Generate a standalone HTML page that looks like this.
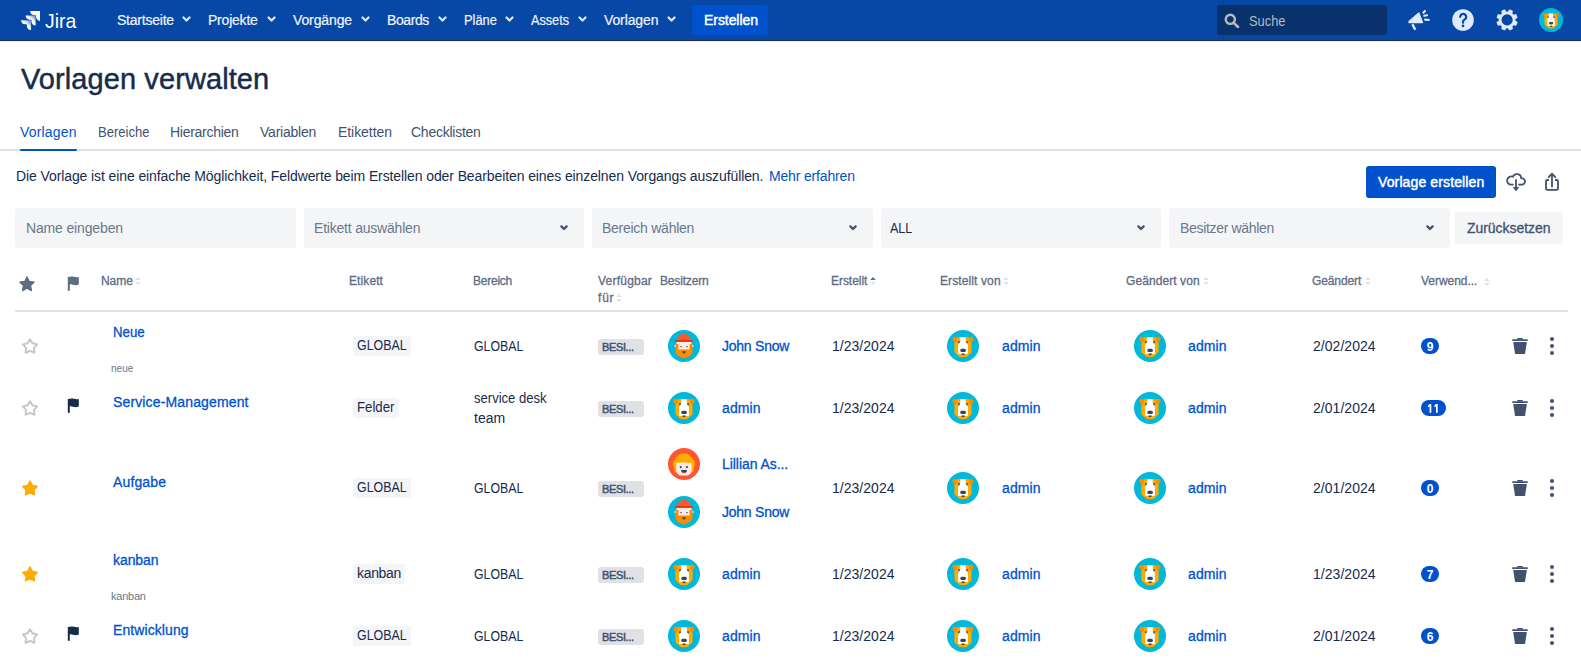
<!DOCTYPE html>
<html><head><meta charset="utf-8"><title>Vorlagen verwalten</title>
<style>
html,body{margin:0;padding:0;width:1581px;height:665px;overflow:hidden;background:#fff;}
body{position:relative;font-family:"Liberation Sans",sans-serif;}
.t{position:absolute;white-space:nowrap;}
.b{position:absolute;display:block;}
</style></head><body>
<div class="b" style="left:0px;top:0px;width:1581px;height:40px;background:#0747A6;border-radius:0px;"></div>
<div class="b" style="left:0px;top:40px;width:1581px;height:1px;background:#1F3056;border-radius:0px;"></div>
<div class="b" style="left:0px;top:41px;width:1581px;height:1px;background:#EDEEF0;border-radius:0px;"></div>
<svg class="b" style="left:20.8px;top:10.8px" width="19.2" height="19.2" viewBox="1.2 0 27.7 27.7"><defs>
<linearGradient id="lg1" x1="98%" y1="0%" x2="59%" y2="41%"><stop offset="18%" stop-color="#fff" stop-opacity="0.4"/><stop offset="100%" stop-color="#fff"/></linearGradient>
<linearGradient id="lg2" x1="100%" y1="0%" x2="55%" y2="45%"><stop offset="18%" stop-color="#fff" stop-opacity="0.4"/><stop offset="100%" stop-color="#fff"/></linearGradient>
</defs>
<path d="M27.7 0H14.4c0 3.3 2.7 6 6 6h2.5v2.4c0 3.3 2.7 6 6 6V1.2c0-.7-.5-1.2-1.2-1.2z" fill="#fff"/>
<path d="M21.1 6.6H7.8c0 3.3 2.7 6 6 6h2.5V15c0 3.3 2.7 6 6 6V7.8c0-.7-.5-1.2-1.2-1.2z" fill="url(#lg1)"/>
<path d="M14.5 13.2H1.2c0 3.3 2.7 6 6 6h2.5v2.4c0 3.3 2.7 6 6 6V14.4c0-.7-.5-1.2-1.2-1.2z" fill="url(#lg2)"/>
</svg>
<div class="t" style="left:45.00px;top:6px;font-size:21px;line-height:30px;color:#fff;transform:scaleX(0.9235);transform-origin:0.00px 0;">Jira</div>
<div class="t" style="left:117.00px;top:10px;font-size:14px;line-height:20px;-webkit-text-stroke:0.2px #EEF4FF;color:#EEF4FF;letter-spacing:-0.222px;">Startseite</div>
<svg class="b" style="left:182px;top:16px;" width="9" height="7" viewBox="0 0 9 7"><path d="M1.5 1.5L4.5 4.5L7.5 1.5" fill="none" stroke="#DEEBFF" stroke-width="2.2" stroke-linecap="round" stroke-linejoin="round"/></svg>
<div class="t" style="left:208.00px;top:10px;font-size:14px;line-height:20px;-webkit-text-stroke:0.2px #EEF4FF;color:#EEF4FF;letter-spacing:-0.214px;">Projekte</div>
<svg class="b" style="left:267px;top:16px;" width="9" height="7" viewBox="0 0 9 7"><path d="M1.5 1.5L4.5 4.5L7.5 1.5" fill="none" stroke="#DEEBFF" stroke-width="2.2" stroke-linecap="round" stroke-linejoin="round"/></svg>
<div class="t" style="left:293.00px;top:10px;font-size:14px;line-height:20px;-webkit-text-stroke:0.2px #EEF4FF;color:#EEF4FF;letter-spacing:-0.114px;">Vorgänge</div>
<svg class="b" style="left:361px;top:16px;" width="9" height="7" viewBox="0 0 9 7"><path d="M1.5 1.5L4.5 4.5L7.5 1.5" fill="none" stroke="#DEEBFF" stroke-width="2.2" stroke-linecap="round" stroke-linejoin="round"/></svg>
<div class="t" style="left:387.00px;top:10px;font-size:14px;line-height:20px;-webkit-text-stroke:0.2px #EEF4FF;color:#EEF4FF;letter-spacing:-0.400px;">Boards</div>
<svg class="b" style="left:438px;top:16px;" width="9" height="7" viewBox="0 0 9 7"><path d="M1.5 1.5L4.5 4.5L7.5 1.5" fill="none" stroke="#DEEBFF" stroke-width="2.2" stroke-linecap="round" stroke-linejoin="round"/></svg>
<div class="t" style="left:464.00px;top:10px;font-size:14px;line-height:20px;-webkit-text-stroke:0.2px #EEF4FF;color:#EEF4FF;transform:scaleX(0.9167);transform-origin:0.00px 0;">Pläne</div>
<svg class="b" style="left:505px;top:16px;" width="9" height="7" viewBox="0 0 9 7"><path d="M1.5 1.5L4.5 4.5L7.5 1.5" fill="none" stroke="#DEEBFF" stroke-width="2.2" stroke-linecap="round" stroke-linejoin="round"/></svg>
<div class="t" style="left:531.00px;top:10px;font-size:14px;line-height:20px;-webkit-text-stroke:0.2px #EEF4FF;color:#EEF4FF;transform:scaleX(0.9048);transform-origin:0.00px 0;">Assets</div>
<svg class="b" style="left:578px;top:16px;" width="9" height="7" viewBox="0 0 9 7"><path d="M1.5 1.5L4.5 4.5L7.5 1.5" fill="none" stroke="#DEEBFF" stroke-width="2.2" stroke-linecap="round" stroke-linejoin="round"/></svg>
<div class="t" style="left:604.00px;top:10px;font-size:14px;line-height:20px;-webkit-text-stroke:0.2px #EEF4FF;color:#EEF4FF;letter-spacing:-0.114px;">Vorlagen</div>
<svg class="b" style="left:667px;top:16px;" width="9" height="7" viewBox="0 0 9 7"><path d="M1.5 1.5L4.5 4.5L7.5 1.5" fill="none" stroke="#DEEBFF" stroke-width="2.2" stroke-linecap="round" stroke-linejoin="round"/></svg>
<div class="b" style="left:692px;top:5px;width:76px;height:30px;background:#0052CC;border-radius:3px;"></div>
<div class="t" style="left:704.00px;top:10px;font-size:14px;line-height:20px;-webkit-text-stroke:0.45px #fff;color:#fff;letter-spacing:-0.062px;">Erstellen</div>
<div class="b" style="left:1217px;top:5px;width:170px;height:30px;background:#09326C;border-radius:3px;"></div>
<svg class="b" style="left:1224px;top:13px;" width="16" height="15" viewBox="0 0 16 15"><circle cx="6.3" cy="6.3" r="4.6" fill="none" stroke="#B3BAC5" stroke-width="2.4"/><path d="M9.8 9.8L14 14" stroke="#B3BAC5" stroke-width="2.6" stroke-linecap="round"/></svg>
<div class="t" style="left:1249.00px;top:11px;font-size:14px;line-height:20px;color:#B3BAC5;transform:scaleX(0.9175);transform-origin:0.00px 0;">Suche</div>
<svg class="b" style="left:1404px;top:6px;" width="30" height="28" viewBox="0 0 30 28"><path d="M5 15.6L14.8 7L18.5 16.5H5.2Z" fill="#DEEBFF" stroke="#DEEBFF" stroke-width="1.3" stroke-linejoin="round"/>
<path d="M8.4 18.3L11.3 23.8" stroke="#DEEBFF" stroke-width="2.4"/>
<path d="M19.4 6.8L21.0 5.0M20.2 9.8L23.1 9.2M21.1 13.6L24.8 14.0" stroke="#DEEBFF" stroke-width="2.1" stroke-linecap="round"/></svg>
<svg class="b" style="left:1452px;top:9px;" width="22" height="22" viewBox="0 0 22 22"><circle cx="11" cy="11" r="10.8" fill="#DEEBFF"/>
<path d="M8.2 7.8a3 3 0 1 1 4.6 2.6c-.8.5-1.8 1.1-1.8 2.4v.9" fill="none" stroke="#0747A6" stroke-width="2.2" stroke-linecap="round"/>
<circle cx="11" cy="16.9" r="1.3" fill="#0747A6"/></svg>
<svg class="b" style="left:1496px;top:9px;" width="22" height="22" viewBox="0 0 22 22"><rect x="8.9" y="0.2" width="4.4" height="5.5" rx="1" fill="#DEEBFF" transform="rotate(22.5 11.1 10.9)"/><rect x="8.9" y="0.2" width="4.4" height="5.5" rx="1" fill="#DEEBFF" transform="rotate(67.5 11.1 10.9)"/><rect x="8.9" y="0.2" width="4.4" height="5.5" rx="1" fill="#DEEBFF" transform="rotate(112.5 11.1 10.9)"/><rect x="8.9" y="0.2" width="4.4" height="5.5" rx="1" fill="#DEEBFF" transform="rotate(157.5 11.1 10.9)"/><rect x="8.9" y="0.2" width="4.4" height="5.5" rx="1" fill="#DEEBFF" transform="rotate(202.5 11.1 10.9)"/><rect x="8.9" y="0.2" width="4.4" height="5.5" rx="1" fill="#DEEBFF" transform="rotate(247.5 11.1 10.9)"/><rect x="8.9" y="0.2" width="4.4" height="5.5" rx="1" fill="#DEEBFF" transform="rotate(292.5 11.1 10.9)"/><rect x="8.9" y="0.2" width="4.4" height="5.5" rx="1" fill="#DEEBFF" transform="rotate(337.5 11.1 10.9)"/><circle cx="11.1" cy="10.9" r="8.5" fill="#DEEBFF"/><circle cx="11.1" cy="10.9" r="5.6" fill="#0747A6"/></svg>
<svg width="0" height="0" style="position:absolute">
<defs>
<symbol id="dog" viewBox="0 0 32 32">
<circle cx="16" cy="16" r="16" fill="#00B8D9"/>
<path d="M8.6 8.6Q9.2 7.2 10.8 7.2H21.2Q22.8 7.2 23.4 8.6L24.6 13V22.2L19.4 27H12.6L7.4 22.2V13Z" fill="#FFAB00"/>
<ellipse cx="7.8" cy="9.5" rx="2.1" ry="2.7" transform="rotate(-25 7.8 9.5)" fill="#FF8B00"/>
<ellipse cx="24.2" cy="9.5" rx="2.1" ry="2.7" transform="rotate(25 24.2 9.5)" fill="#FF8B00"/>
<path d="M13.4 7.2H18.6L18.9 12.2L20.9 14.8V23Q20.9 24.2 19.7 24.2H12.3Q11.1 24.2 11.1 23V14.8L13.1 12.2Z" fill="#fff"/>
<circle cx="11.9" cy="12.1" r="1.15" fill="#505F79"/><circle cx="20.2" cy="12.1" r="1.15" fill="#505F79"/>
<rect x="13.3" y="18.8" width="5.6" height="3.1" rx="1.5" fill="#344563"/>
<path d="M12.1 23.9H19.9L18.5 26.7Q16 27.7 13.5 26.7Z" fill="#FFAB00"/>
<path d="M14.3 23.6H17.9Q17.6 25.2 16.1 25.3Q14.6 25.2 14.3 23.6Z" fill="#344563"/>
</symbol>
<symbol id="john" viewBox="0 0 32 32">
<circle cx="16" cy="16" r="16" fill="#00B8D9"/>
<path d="M9.2 10.4C9.2 6.6 12.2 3.9 16 3.9S22.8 6.6 22.8 10.4Z" fill="#FF5630"/>
<rect x="7" y="9.9" width="17.8" height="2" rx="0.6" fill="#DE350B"/>
<circle cx="7.6" cy="16" r="1.3" fill="#FFEBE6"/><circle cx="24.4" cy="16" r="1.3" fill="#FFEBE6"/>
<rect x="8.5" y="11.9" width="15" height="8" fill="#FFEBE6"/>
<path d="M7.6 14H10.4V19.6H21.6V14H24.4V22.4C24.4 23.2 24 23.6 23.5 24 23.6 24.9 23 25.5 22.2 25.6 21.9 26.5 21 26.8 20.2 26.6 19.7 27.4 18.9 27.6 18 27.6 17.6 28.2 16.8 28.4 16 28.4S14.4 28.2 14 27.6C13.1 27.6 12.3 27.4 11.8 26.6 11 26.8 10.1 26.5 9.8 25.6 9 25.5 8.4 24.9 8.5 24 8 23.6 7.6 23.2 7.6 22.4Z" fill="#FF8B00"/>
<rect x="12.2" y="16" width="1.6" height="1.3" rx="0.5" fill="#505F79"/><rect x="18.2" y="16" width="1.6" height="1.3" rx="0.5" fill="#505F79"/>
<path d="M14.3 21.2H17.7Q17.7 23.5 16 23.5T14.3 21.2Z" fill="#344563"/>
</symbol>
<symbol id="lil" viewBox="0 0 32 32">
<circle cx="16" cy="16" r="16" fill="#FF5630"/>
<path d="M16 5.2C19.4 5.2 22 6.8 23.2 9.2 24.4 9.6 25.2 10.6 25.2 11.8 26.3 12.4 26.9 13.6 26.6 14.8 27.4 15.8 27.2 17.2 26.4 18L25.2 24.3H6.8L5.6 18C4.8 17.2 4.6 15.8 5.4 14.8 5.1 13.6 5.7 12.4 6.8 11.8 6.8 10.6 7.6 9.6 8.8 9.2 10 6.8 12.6 5.2 16 5.2Z" fill="#FFAB00"/>
<path d="M8.2 14.5H23.6V22.4C23.6 25.2 21.2 27.4 18.4 27.4H13.4C10.6 27.4 8.2 25.2 8.2 22.4Z" fill="#FFEBE6"/>
<path d="M8 14.6C11.4 15.2 14.4 14.6 16 12.6 17.6 14.6 20.6 15.2 24 14.6V12H8Z" fill="#FFAB00"/>
<circle cx="12.7" cy="19.1" r="1.1" fill="#344563"/><circle cx="18.9" cy="19.1" r="1.1" fill="#344563"/>
<path d="M13.1 22.1H19Q19 25.2 16 25.2T13.1 22.1Z" fill="#344563"/>
<path d="M14.6 24.4Q16 23.4 17.5 24.4Q16 25.6 14.6 24.4Z" fill="#FF5630"/>
</symbol>
<symbol id="trash" viewBox="0 0 16 16">
<path d="M5.7 0.1H10.3Q10.85 0.1 10.85 0.6V1.4H5.2V0.6Q5.2 0.1 5.7 0.1Z" fill="#42526E"/>
<rect x="0.1" y="1.2" width="15.8" height="1.75" rx="0.8" fill="#42526E"/>
<path d="M1.2 4.1H14.85L13 15.9H3.05Z" fill="#42526E"/>
</symbol>
<symbol id="dots" viewBox="0 0 4 18">
<circle cx="2" cy="2" r="2" fill="#42526E"/><circle cx="2" cy="9" r="2" fill="#42526E"/><circle cx="2" cy="16" r="2" fill="#42526E"/>
</symbol>
<symbol id="staro" viewBox="0 0 18 17">
<path d="M9.00 1.20L11.47 5.30L16.13 6.38L12.99 10.00L13.41 14.77L9.00 12.90L4.59 14.77L5.01 10.00L1.87 6.38L6.53 5.30Z" fill="none" stroke="#C6C6C6" stroke-width="1.9" stroke-linejoin="round"/>
</symbol>
<symbol id="starf" viewBox="0 0 18 17">
<path d="M9.00 0.90L11.47 5.30L16.42 6.29L12.99 10.00L13.58 15.01L9.00 12.90L4.42 15.01L5.01 10.00L1.58 6.29L6.53 5.30Z" fill="#FFAB00" stroke="#FFAB00" stroke-width="1.2" stroke-linejoin="round"/>
</symbol>
<symbol id="flag" viewBox="0 0 12 15">
<path d="M0.8 1.1C3 0.6 5 0.2 7 0.8S10.5 1.2 11.8 0.9V8.6C10.5 9 9 9.5 7 9.1S3.5 8.1 2.8 8.4V14.3Q2.8 14.9 1.8 14.9Q0.8 14.9 0.8 14.3Z" fill="currentColor"/>
</symbol>
</defs></svg>
<svg class="b" style="left:1539px;top:8px;" width="24" height="24"><use href="#dog"/></svg>
<div class="t" style="left:21.00px;top:59px;font-size:29px;line-height:40px;-webkit-text-stroke:0.45px #172B4D;color:#172B4D;letter-spacing:0.088px;">Vorlagen verwalten</div>
<div class="t" style="left:20.00px;top:122px;font-size:14px;line-height:20px;color:#0052CC;letter-spacing:0.171px;">Vorlagen</div>
<div class="t" style="left:98.00px;top:122px;font-size:14px;line-height:20px;color:#42526E;transform:scaleX(0.9309);transform-origin:0.00px 0;">Bereiche</div>
<div class="t" style="left:170.00px;top:122px;font-size:14px;line-height:20px;color:#42526E;letter-spacing:-0.280px;">Hierarchien</div>
<div class="t" style="left:260.00px;top:122px;font-size:14px;line-height:20px;color:#42526E;letter-spacing:-0.225px;">Variablen</div>
<div class="t" style="left:338.00px;top:122px;font-size:14px;line-height:20px;color:#42526E;letter-spacing:-0.062px;">Etiketten</div>
<div class="t" style="left:411.00px;top:122px;font-size:14px;line-height:20px;color:#42526E;letter-spacing:-0.250px;">Checklisten</div>
<div class="b" style="left:0px;top:149px;width:1581px;height:2px;background:#DFE1E6;border-radius:0px;"></div>
<div class="b" style="left:20px;top:149px;width:57px;height:2px;background:#0052CC;border-radius:1px;"></div>
<div class="t" style="left:16.00px;top:166px;font-size:14px;line-height:20px;color:#172B4D;letter-spacing:-0.101px;">Die Vorlage ist eine einfache Möglichkeit, Feldwerte beim Erstellen oder Bearbeiten eines einzelnen Vorgangs auszufüllen.</div>
<div class="t" style="left:769.00px;top:166px;font-size:14px;line-height:20px;color:#0052CC;letter-spacing:-0.167px;">Mehr erfahren</div>
<div class="b" style="left:1366px;top:166px;width:130px;height:32px;background:#0052CC;border-radius:3px;"></div>
<div class="t" style="left:1378.00px;top:172px;font-size:14px;line-height:20px;-webkit-text-stroke:0.45px #fff;color:#fff;letter-spacing:0.125px;">Vorlage erstellen</div>
<svg class="b" style="left:1505px;top:172px;" width="22" height="20" viewBox="0 0 22 20"><path d="M8.5 12.6H6.2A4.1 4.1 0 1 1 7.92 4.78A4.3 4.3 0 0 1 16.2 6.25A3.2 3.2 0 1 1 16.8 12.6H13.3" fill="none" stroke="#42526E" stroke-width="1.8" stroke-linejoin="round"/>
<path d="M11 7.3V16" stroke="#42526E" stroke-width="1.8"/>
<path d="M8.1 15.3H13.9L11 18.9Z" fill="#42526E" stroke="#42526E" stroke-width="0.6" stroke-linejoin="round"/></svg>
<svg class="b" style="left:1544px;top:172px;" width="16" height="20" viewBox="0 0 16 20"><path d="M4.9 8H3.2Q2 8 2 9.2V16.7Q2 17.9 3.2 17.9H12.8Q14 17.9 14 16.7V9.2Q14 8 12.8 8H11" fill="none" stroke="#42526E" stroke-width="1.8"/>
<path d="M8 14.7V1.9M4.7 5.2L8 1.7 11.3 5.2" fill="none" stroke="#42526E" stroke-width="1.8" stroke-linecap="round" stroke-linejoin="round"/></svg>
<div class="b" style="left:15px;top:208px;width:281px;height:40px;background:#F4F5F7;border-radius:3px;"></div>
<div class="t" style="left:26.00px;top:218px;font-size:14px;line-height:20px;color:#6B778C;letter-spacing:-0.150px;">Name eingeben</div>
<div class="b" style="left:304px;top:208px;width:280px;height:40px;background:#F4F5F7;border-radius:3px;"></div>
<div class="t" style="left:314.00px;top:218px;font-size:14px;line-height:20px;color:#6B778C;letter-spacing:-0.206px;">Etikett auswählen</div>
<svg class="b" style="left:560px;top:225px;" width="8" height="6" viewBox="0 0 8 6"><path d="M1.4 1.4L4 4 6.6 1.4" fill="none" stroke="#42526E" stroke-width="2.3" stroke-linecap="round" stroke-linejoin="round"/></svg>
<div class="b" style="left:592px;top:208px;width:281px;height:40px;background:#F4F5F7;border-radius:3px;"></div>
<div class="t" style="left:602.00px;top:218px;font-size:14px;line-height:20px;color:#6B778C;letter-spacing:-0.262px;">Bereich wählen</div>
<svg class="b" style="left:849px;top:225px;" width="8" height="6" viewBox="0 0 8 6"><path d="M1.4 1.4L4 4 6.6 1.4" fill="none" stroke="#42526E" stroke-width="2.3" stroke-linecap="round" stroke-linejoin="round"/></svg>
<div class="b" style="left:881px;top:208px;width:280px;height:40px;background:#F4F5F7;border-radius:3px;"></div>
<div class="t" style="left:890.00px;top:218px;font-size:14px;line-height:20px;color:#172B4D;transform:scaleX(0.8960);transform-origin:0.00px 0;">ALL</div>
<svg class="b" style="left:1137px;top:225px;" width="8" height="6" viewBox="0 0 8 6"><path d="M1.4 1.4L4 4 6.6 1.4" fill="none" stroke="#42526E" stroke-width="2.3" stroke-linecap="round" stroke-linejoin="round"/></svg>
<div class="b" style="left:1169px;top:208px;width:281px;height:40px;background:#F4F5F7;border-radius:3px;"></div>
<div class="t" style="left:1180.00px;top:218px;font-size:14px;line-height:20px;color:#6B778C;letter-spacing:-0.321px;">Besitzer wählen</div>
<svg class="b" style="left:1426px;top:225px;" width="8" height="6" viewBox="0 0 8 6"><path d="M1.4 1.4L4 4 6.6 1.4" fill="none" stroke="#42526E" stroke-width="2.3" stroke-linecap="round" stroke-linejoin="round"/></svg>
<div class="b" style="left:1455px;top:212px;width:108px;height:32px;background:#F4F5F7;border-radius:3px;"></div>
<div class="t" style="left:1467.00px;top:218px;font-size:14px;line-height:20px;-webkit-text-stroke:0.3px #42526E;color:#42526E;letter-spacing:-0.045px;">Zurücksetzen</div>
<svg class="b" style="left:19px;top:276px;" width="16" height="16" viewBox="0 0 16 16"><path d="M8 0.8l2.2 4.6 5 .7-3.6 3.5.9 5L8 12.2 3.5 14.6l.9-5L0.8 6.1l5-.7Z" fill="#5E6C84" stroke="#5E6C84" stroke-width="1.2" stroke-linejoin="round"/></svg>
<svg class="b" style="left:67px;top:276px;color:#5E6C84" width="12" height="15"><use href="#flag"/></svg>
<div class="t" style="left:101.00px;top:271px;font-size:12px;line-height:20px;-webkit-text-stroke:0.3px #5E6C84;color:#5E6C84;letter-spacing:-0.067px;">Name</div>
<svg class="b" style="left:135px;top:277px;" width="6" height="8" viewBox="0 0 6 8"><path d="M0.2 3.1L3 0.1 5.8 3.1Z M0.2 4.9L3 7.9 5.8 4.9Z" fill="#DFE1E6"/></svg>
<div class="t" style="left:349.00px;top:271px;font-size:12px;line-height:20px;-webkit-text-stroke:0.3px #5E6C84;color:#5E6C84;letter-spacing:0.100px;">Etikett</div>
<div class="t" style="left:473.00px;top:271px;font-size:12px;line-height:20px;-webkit-text-stroke:0.3px #5E6C84;color:#5E6C84;letter-spacing:-0.233px;">Bereich</div>
<div class="t" style="left:598.00px;top:271px;font-size:12px;line-height:20px;-webkit-text-stroke:0.3px #5E6C84;color:#5E6C84;letter-spacing:0.225px;">Verfügbar</div>
<div class="t" style="left:660.00px;top:271px;font-size:12px;line-height:20px;-webkit-text-stroke:0.3px #5E6C84;color:#5E6C84;letter-spacing:-0.175px;">Besitzern</div>
<div class="t" style="left:831.00px;top:271px;font-size:12px;line-height:20px;-webkit-text-stroke:0.3px #5E6C84;color:#5E6C84;letter-spacing:-0.043px;">Erstellt</div>
<svg class="b" style="left:870px;top:277px;" width="6" height="8" viewBox="0 0 6 8"><path d="M0.2 3.1L3 0.1 5.8 3.1Z" fill="#5E6C84"/><path d="M0.2 4.9L3 7.9 5.8 4.9Z" fill="#DFE1E6"/></svg>
<div class="t" style="left:940.00px;top:271px;font-size:12px;line-height:20px;-webkit-text-stroke:0.3px #5E6C84;color:#5E6C84;letter-spacing:0.109px;">Erstellt von</div>
<svg class="b" style="left:1003px;top:277px;" width="6" height="8" viewBox="0 0 6 8"><path d="M0.2 3.1L3 0.1 5.8 3.1Z M0.2 4.9L3 7.9 5.8 4.9Z" fill="#DFE1E6"/></svg>
<div class="t" style="left:1126.00px;top:271px;font-size:12px;line-height:20px;-webkit-text-stroke:0.3px #5E6C84;color:#5E6C84;letter-spacing:0.082px;">Geändert von</div>
<svg class="b" style="left:1203px;top:277px;" width="6" height="8" viewBox="0 0 6 8"><path d="M0.2 3.1L3 0.1 5.8 3.1Z M0.2 4.9L3 7.9 5.8 4.9Z" fill="#DFE1E6"/></svg>
<div class="t" style="left:1312.00px;top:271px;font-size:12px;line-height:20px;-webkit-text-stroke:0.3px #5E6C84;color:#5E6C84;letter-spacing:-0.114px;">Geändert</div>
<svg class="b" style="left:1365px;top:277px;" width="6" height="8" viewBox="0 0 6 8"><path d="M0.2 3.1L3 0.1 5.8 3.1Z M0.2 4.9L3 7.9 5.8 4.9Z" fill="#DFE1E6"/></svg>
<div class="t" style="left:1421.00px;top:271px;font-size:12px;line-height:20px;-webkit-text-stroke:0.3px #5E6C84;color:#5E6C84;letter-spacing:-0.044px;">Verwend...</div>
<svg class="b" style="left:1484px;top:278px;" width="6" height="8" viewBox="0 0 6 8"><path d="M0.2 3.1L3 0.1 5.8 3.1Z M0.2 4.9L3 7.9 5.8 4.9Z" fill="#DFE1E6"/></svg>
<div class="t" style="left:598.00px;top:288px;font-size:12px;line-height:20px;-webkit-text-stroke:0.3px #5E6C84;color:#5E6C84;letter-spacing:0.800px;">für</div>
<svg class="b" style="left:616px;top:294px;" width="6" height="8" viewBox="0 0 6 8"><path d="M0.2 3.1L3 0.1 5.8 3.1Z M0.2 4.9L3 7.9 5.8 4.9Z" fill="#DFE1E6"/></svg>
<div class="b" style="left:15px;top:310px;width:1553px;height:2px;background:#DFE1E6;border-radius:0px;"></div>
<svg class="b" style="left:21px;top:337.9px;" width="18" height="17"><use href="#staro"/></svg>
<div class="t" style="left:113.00px;top:322px;font-size:14px;line-height:20px;-webkit-text-stroke:0.3px #0052CC;color:#0052CC;transform:scaleX(0.9471);transform-origin:0.00px 0;">Neue</div>
<div class="t" style="left:111.00px;top:358px;font-size:11px;line-height:20px;color:#6B778C;transform:scaleX(0.9160);transform-origin:0.00px 0;">neue</div>
<div class="b" style="left:353px;top:336px;width:58px;height:20px;background:#F4F5F7;border-radius:3px;"></div>
<div class="t" style="left:357.00px;top:335px;font-size:14px;line-height:20px;color:#172B4D;transform:scaleX(0.8857);transform-origin:0.00px 0;">GLOBAL</div>
<div class="t" style="left:474.00px;top:336px;font-size:14px;line-height:20px;color:#172B4D;transform:scaleX(0.8804);transform-origin:0.00px 0;">GLOBAL</div>
<div class="b" style="left:598px;top:339px;width:46px;height:16px;background:#DFE1E6;border-radius:3px;"></div>
<div class="t" style="left:602.00px;top:337px;font-size:11px;line-height:20px;-webkit-text-stroke:0.5px #42526E;color:#42526E;letter-spacing:-0.367px;">BESI...</div>
<svg class="b" style="left:668px;top:330px;" width="32" height="32"><use href="#john"/></svg>
<div class="t" style="left:722.00px;top:336px;font-size:14px;line-height:20px;-webkit-text-stroke:0.3px #0052CC;color:#0052CC;letter-spacing:-0.238px;">John Snow</div>
<div class="t" style="left:832.00px;top:336px;font-size:14px;line-height:20px;color:#172B4D;letter-spacing:0.025px;">1/23/2024</div>
<svg class="b" style="left:947px;top:330px;" width="32" height="32"><use href="#dog"/></svg>
<div class="t" style="left:1002.00px;top:336px;font-size:14px;line-height:20px;-webkit-text-stroke:0.3px #0052CC;color:#0052CC;letter-spacing:0.125px;">admin</div>
<svg class="b" style="left:1134px;top:330px;" width="32" height="32"><use href="#dog"/></svg>
<div class="t" style="left:1188.00px;top:336px;font-size:14px;line-height:20px;-webkit-text-stroke:0.3px #0052CC;color:#0052CC;letter-spacing:0.125px;">admin</div>
<div class="t" style="left:1313.00px;top:336px;font-size:14px;line-height:20px;color:#172B4D;letter-spacing:0.037px;">2/02/2024</div>
<div class="b" style="left:1421px;top:338px;width:18px;height:16px;background:#0052CC;border-radius:8px;"></div>
<div class="t" style="left:1421px;top:339px;width:18px;height:16px;line-height:16px;font-size:12px;font-weight:bold;color:#fff;text-align:center">9</div>
<svg class="b" style="left:1512px;top:338px;" width="16" height="16"><use href="#trash"/></svg>
<svg class="b" style="left:1550px;top:337px;" width="4" height="18"><use href="#dots"/></svg>
<svg class="b" style="left:21px;top:399.9px;" width="18" height="17"><use href="#staro"/></svg>
<svg class="b" style="left:67px;top:398px;color:#172B4D" width="12" height="15"><use href="#flag"/></svg>
<div class="t" style="left:113.00px;top:392px;font-size:14px;line-height:20px;-webkit-text-stroke:0.3px #0052CC;color:#0052CC;letter-spacing:0.141px;">Service-Management</div>
<div class="b" style="left:353px;top:398px;width:46px;height:20px;background:#F4F5F7;border-radius:3px;"></div>
<div class="t" style="left:357.00px;top:397px;font-size:14px;line-height:20px;color:#172B4D;transform:scaleX(0.9425);transform-origin:0.00px 0;">Felder</div>
<div class="t" style="left:474.00px;top:388px;font-size:14px;line-height:20px;color:#172B4D;transform:scaleX(0.9329);transform-origin:0.00px 0;">service desk</div>
<div class="t" style="left:474.00px;top:408px;font-size:14px;line-height:20px;color:#172B4D;">team</div>
<div class="b" style="left:598px;top:401px;width:46px;height:16px;background:#DFE1E6;border-radius:3px;"></div>
<div class="t" style="left:602.00px;top:399px;font-size:11px;line-height:20px;-webkit-text-stroke:0.5px #42526E;color:#42526E;letter-spacing:-0.367px;">BESI...</div>
<svg class="b" style="left:668px;top:392px;" width="32" height="32"><use href="#dog"/></svg>
<div class="t" style="left:722.00px;top:398px;font-size:14px;line-height:20px;-webkit-text-stroke:0.3px #0052CC;color:#0052CC;letter-spacing:0.125px;">admin</div>
<div class="t" style="left:832.00px;top:398px;font-size:14px;line-height:20px;color:#172B4D;letter-spacing:0.025px;">1/23/2024</div>
<svg class="b" style="left:947px;top:392px;" width="32" height="32"><use href="#dog"/></svg>
<div class="t" style="left:1002.00px;top:398px;font-size:14px;line-height:20px;-webkit-text-stroke:0.3px #0052CC;color:#0052CC;letter-spacing:0.125px;">admin</div>
<svg class="b" style="left:1134px;top:392px;" width="32" height="32"><use href="#dog"/></svg>
<div class="t" style="left:1188.00px;top:398px;font-size:14px;line-height:20px;-webkit-text-stroke:0.3px #0052CC;color:#0052CC;letter-spacing:0.125px;">admin</div>
<div class="t" style="left:1313.00px;top:398px;font-size:14px;line-height:20px;color:#172B4D;letter-spacing:0.037px;">2/01/2024</div>
<div class="b" style="left:1421px;top:400px;width:25px;height:16px;background:#0052CC;border-radius:8px;"></div>
<svg class="b" style="left:1421px;top:400px;" width="25" height="16" viewBox="0 0 25 16"><path d="M8.6 4.1H10.3V12.8H8.6V6.4L7.0 7.2V5.6Z" fill="#fff"/><path d="M15.0 4.1H16.7V12.8H15.0V6.4L13.4 7.2V5.6Z" fill="#fff"/></svg>
<svg class="b" style="left:1512px;top:400px;" width="16" height="16"><use href="#trash"/></svg>
<svg class="b" style="left:1550px;top:399px;" width="4" height="18"><use href="#dots"/></svg>
<svg class="b" style="left:21px;top:479.6px;" width="18" height="17"><use href="#starf"/></svg>
<div class="t" style="left:113.00px;top:472px;font-size:14px;line-height:20px;-webkit-text-stroke:0.3px #0052CC;color:#0052CC;letter-spacing:0.133px;">Aufgabe</div>
<div class="b" style="left:353px;top:478px;width:58px;height:20px;background:#F4F5F7;border-radius:3px;"></div>
<div class="t" style="left:357.00px;top:477px;font-size:14px;line-height:20px;color:#172B4D;transform:scaleX(0.8857);transform-origin:0.00px 0;">GLOBAL</div>
<div class="t" style="left:474.00px;top:478px;font-size:14px;line-height:20px;color:#172B4D;transform:scaleX(0.8804);transform-origin:0.00px 0;">GLOBAL</div>
<div class="b" style="left:598px;top:481px;width:46px;height:16px;background:#DFE1E6;border-radius:3px;"></div>
<div class="t" style="left:602.00px;top:479px;font-size:11px;line-height:20px;-webkit-text-stroke:0.5px #42526E;color:#42526E;letter-spacing:-0.367px;">BESI...</div>
<svg class="b" style="left:668px;top:448px;" width="32" height="32"><use href="#lil"/></svg>
<div class="t" style="left:722.00px;top:454px;font-size:14px;line-height:20px;-webkit-text-stroke:0.3px #0052CC;color:#0052CC;letter-spacing:-0.058px;">Lillian As...</div>
<svg class="b" style="left:668px;top:496px;" width="32" height="32"><use href="#john"/></svg>
<div class="t" style="left:722.00px;top:502px;font-size:14px;line-height:20px;-webkit-text-stroke:0.3px #0052CC;color:#0052CC;letter-spacing:-0.238px;">John Snow</div>
<div class="t" style="left:832.00px;top:478px;font-size:14px;line-height:20px;color:#172B4D;letter-spacing:0.025px;">1/23/2024</div>
<svg class="b" style="left:947px;top:472px;" width="32" height="32"><use href="#dog"/></svg>
<div class="t" style="left:1002.00px;top:478px;font-size:14px;line-height:20px;-webkit-text-stroke:0.3px #0052CC;color:#0052CC;letter-spacing:0.125px;">admin</div>
<svg class="b" style="left:1134px;top:472px;" width="32" height="32"><use href="#dog"/></svg>
<div class="t" style="left:1188.00px;top:478px;font-size:14px;line-height:20px;-webkit-text-stroke:0.3px #0052CC;color:#0052CC;letter-spacing:0.125px;">admin</div>
<div class="t" style="left:1313.00px;top:478px;font-size:14px;line-height:20px;color:#172B4D;letter-spacing:0.037px;">2/01/2024</div>
<div class="b" style="left:1421px;top:480px;width:18px;height:16px;background:#0052CC;border-radius:8px;"></div>
<div class="t" style="left:1421px;top:481px;width:18px;height:16px;line-height:16px;font-size:12px;font-weight:bold;color:#fff;text-align:center">0</div>
<svg class="b" style="left:1512px;top:480px;" width="16" height="16"><use href="#trash"/></svg>
<svg class="b" style="left:1550px;top:479px;" width="4" height="18"><use href="#dots"/></svg>
<svg class="b" style="left:21px;top:565.6px;" width="18" height="17"><use href="#starf"/></svg>
<div class="t" style="left:113.00px;top:550px;font-size:14px;line-height:20px;-webkit-text-stroke:0.3px #0052CC;color:#0052CC;letter-spacing:-0.080px;">kanban</div>
<div class="t" style="left:111.00px;top:586px;font-size:11px;line-height:20px;color:#6B778C;letter-spacing:-0.240px;">kanban</div>
<div class="b" style="left:353px;top:564px;width:52px;height:20px;background:#F4F5F7;border-radius:3px;"></div>
<div class="t" style="left:357.00px;top:563px;font-size:14px;line-height:20px;color:#172B4D;letter-spacing:-0.319px;">kanban</div>
<div class="t" style="left:474.00px;top:564px;font-size:14px;line-height:20px;color:#172B4D;transform:scaleX(0.8804);transform-origin:0.00px 0;">GLOBAL</div>
<div class="b" style="left:598px;top:567px;width:46px;height:16px;background:#DFE1E6;border-radius:3px;"></div>
<div class="t" style="left:602.00px;top:565px;font-size:11px;line-height:20px;-webkit-text-stroke:0.5px #42526E;color:#42526E;letter-spacing:-0.367px;">BESI...</div>
<svg class="b" style="left:668px;top:558px;" width="32" height="32"><use href="#dog"/></svg>
<div class="t" style="left:722.00px;top:564px;font-size:14px;line-height:20px;-webkit-text-stroke:0.3px #0052CC;color:#0052CC;letter-spacing:0.125px;">admin</div>
<div class="t" style="left:832.00px;top:564px;font-size:14px;line-height:20px;color:#172B4D;letter-spacing:0.025px;">1/23/2024</div>
<svg class="b" style="left:947px;top:558px;" width="32" height="32"><use href="#dog"/></svg>
<div class="t" style="left:1002.00px;top:564px;font-size:14px;line-height:20px;-webkit-text-stroke:0.3px #0052CC;color:#0052CC;letter-spacing:0.125px;">admin</div>
<svg class="b" style="left:1134px;top:558px;" width="32" height="32"><use href="#dog"/></svg>
<div class="t" style="left:1188.00px;top:564px;font-size:14px;line-height:20px;-webkit-text-stroke:0.3px #0052CC;color:#0052CC;letter-spacing:0.125px;">admin</div>
<div class="t" style="left:1313.00px;top:564px;font-size:14px;line-height:20px;color:#172B4D;letter-spacing:0.037px;">1/23/2024</div>
<div class="b" style="left:1421px;top:566px;width:18px;height:16px;background:#0052CC;border-radius:8px;"></div>
<div class="t" style="left:1421px;top:567px;width:18px;height:16px;line-height:16px;font-size:12px;font-weight:bold;color:#fff;text-align:center">7</div>
<svg class="b" style="left:1512px;top:566px;" width="16" height="16"><use href="#trash"/></svg>
<svg class="b" style="left:1550px;top:565px;" width="4" height="18"><use href="#dots"/></svg>
<svg class="b" style="left:21px;top:627.9px;" width="18" height="17"><use href="#staro"/></svg>
<svg class="b" style="left:67px;top:626px;color:#172B4D" width="12" height="15"><use href="#flag"/></svg>
<div class="t" style="left:113.00px;top:620px;font-size:14px;line-height:20px;-webkit-text-stroke:0.3px #0052CC;color:#0052CC;letter-spacing:0.090px;">Entwicklung</div>
<div class="b" style="left:353px;top:626px;width:58px;height:20px;background:#F4F5F7;border-radius:3px;"></div>
<div class="t" style="left:357.00px;top:625px;font-size:14px;line-height:20px;color:#172B4D;transform:scaleX(0.8857);transform-origin:0.00px 0;">GLOBAL</div>
<div class="t" style="left:474.00px;top:626px;font-size:14px;line-height:20px;color:#172B4D;transform:scaleX(0.8804);transform-origin:0.00px 0;">GLOBAL</div>
<div class="b" style="left:598px;top:629px;width:46px;height:16px;background:#DFE1E6;border-radius:3px;"></div>
<div class="t" style="left:602.00px;top:627px;font-size:11px;line-height:20px;-webkit-text-stroke:0.5px #42526E;color:#42526E;letter-spacing:-0.367px;">BESI...</div>
<svg class="b" style="left:668px;top:620px;" width="32" height="32"><use href="#dog"/></svg>
<div class="t" style="left:722.00px;top:626px;font-size:14px;line-height:20px;-webkit-text-stroke:0.3px #0052CC;color:#0052CC;letter-spacing:0.125px;">admin</div>
<div class="t" style="left:832.00px;top:626px;font-size:14px;line-height:20px;color:#172B4D;letter-spacing:0.025px;">1/23/2024</div>
<svg class="b" style="left:947px;top:620px;" width="32" height="32"><use href="#dog"/></svg>
<div class="t" style="left:1002.00px;top:626px;font-size:14px;line-height:20px;-webkit-text-stroke:0.3px #0052CC;color:#0052CC;letter-spacing:0.125px;">admin</div>
<svg class="b" style="left:1134px;top:620px;" width="32" height="32"><use href="#dog"/></svg>
<div class="t" style="left:1188.00px;top:626px;font-size:14px;line-height:20px;-webkit-text-stroke:0.3px #0052CC;color:#0052CC;letter-spacing:0.125px;">admin</div>
<div class="t" style="left:1313.00px;top:626px;font-size:14px;line-height:20px;color:#172B4D;letter-spacing:0.037px;">2/01/2024</div>
<div class="b" style="left:1421px;top:628px;width:18px;height:16px;background:#0052CC;border-radius:8px;"></div>
<div class="t" style="left:1421px;top:629px;width:18px;height:16px;line-height:16px;font-size:12px;font-weight:bold;color:#fff;text-align:center">6</div>
<svg class="b" style="left:1512px;top:628px;" width="16" height="16"><use href="#trash"/></svg>
<svg class="b" style="left:1550px;top:627px;" width="4" height="18"><use href="#dots"/></svg>
</body></html>
